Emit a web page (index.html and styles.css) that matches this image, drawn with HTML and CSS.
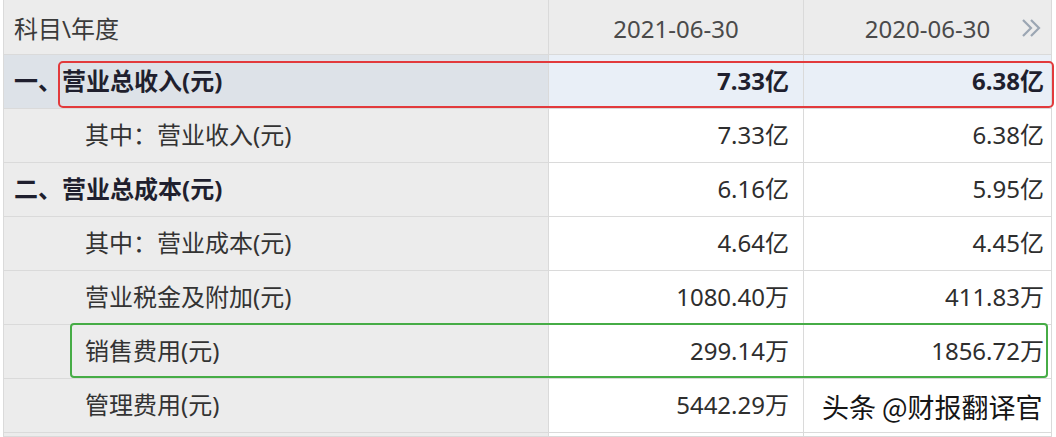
FILE: index.html
```html
<!DOCTYPE html>
<html lang="zh-CN">
<head>
<meta charset="utf-8">
<link rel="stylesheet" href="styles.css">
</head>
<body>
<div class="sheet">
  <table class="fin">
    <colgroup>
      <col class="c-label">
      <col class="c-v1">
      <col class="c-v2">
    </colgroup>
    <thead>
      <tr class="head">
        <th class="lbl">科目\年度</th>
        <th class="date">2021-06-30</th>
        <th class="date last">2020-06-30
          <svg class="more" width="24" height="20" viewBox="0 0 24 20"><path d="M3 2 L11 10 L3 18 M11 2 L19 10 L11 18" fill="none" stroke="#9ba6b3" stroke-width="2.2"/></svg>
        </th>
      </tr>
    </thead>
    <tbody>
      <tr class="hl bold">
        <td class="lbl">一、营业总收入(元)</td>
        <td class="v1">7.33亿</td>
        <td class="v2">6.38亿</td>
      </tr>
      <tr>
        <td class="lbl sub">其中：营业收入(元)</td>
        <td class="v1">7.33亿</td>
        <td class="v2">6.38亿</td>
      </tr>
      <tr class="bold">
        <td class="lbl">二、营业总成本(元)</td>
        <td class="v1 norm">6.16亿</td>
        <td class="v2 norm">5.95亿</td>
      </tr>
      <tr>
        <td class="lbl sub">其中：营业成本(元)</td>
        <td class="v1">4.64亿</td>
        <td class="v2">4.45亿</td>
      </tr>
      <tr>
        <td class="lbl sub">营业税金及附加(元)</td>
        <td class="v1">1080.40万</td>
        <td class="v2">411.83万</td>
      </tr>
      <tr>
        <td class="lbl sub">销售费用(元)</td>
        <td class="v1">299.14万</td>
        <td class="v2">1856.72万</td>
      </tr>
      <tr>
        <td class="lbl sub">管理费用(元)</td>
        <td class="v1">5442.29万</td>
        <td class="v2"></td>
      </tr>
      <tr class="tail">
        <td class="lbl"></td>
        <td class="v1"></td>
        <td class="v2"></td>
      </tr>
    </tbody>
  </table>
  <div class="mark red"></div>
  <div class="mark green"></div>
  <div class="watermark">头条 @财报翻译官</div>
</div>
</body>
</html>
```
FILE: styles.css
```css
html, body {
  margin: 0;
  padding: 0;
  background: #ffffff;
  overflow: hidden;
}
body {
  width: 1056px;
  height: 437px;
  font-family: "Noto Sans", "Noto Sans CJK SC", sans-serif;
  color: #333;
}
.sheet {
  position: relative;
  padding-left: 3px;
  width: 1048px;
}
.fin {
  border-collapse: collapse;
  table-layout: fixed;
  width: 1048px;
  font-size: 24px;
}
.c-label { width: 545px; }
.c-v1 { width: 255px; }
.c-v2 { width: 248px; }
.fin th, .fin td {
  border: 1px solid #dadada;
  border-top: none;
  padding: 0;
  white-space: nowrap;
  line-height: 28px;
}
.head th {
  height: 54px;
  padding-top: 4px;
  box-sizing: border-box;
  background: #ececec;
  font-weight: normal;
  color: #3a3a3a;
}
.head .lbl { text-align: left; padding-left: 10px; }
.head .date { text-align: center; color: #4a4a4a; position: relative; }
.more {
  position: absolute;
  right: 7px;
  top: 18px;
}
.fin td {
  height: 53px;
}
.fin .tail td {
  height: 3px;
}
td.lbl {
  background: #ececec;
  padding-left: 10px;
  color: #333;
}
td.lbl.sub { padding-left: 81px; }
td.v1, td.v2 {
  text-align: right;
  background: #ffffff;
  color: #2e2e2e;
}
td.v1 { padding-right: 14px; }
td.v2 { padding-right: 7px; }
.bold td { font-weight: bold; color: #1f1f2e; }
.bold td.norm { font-weight: normal; color: #2e2e2e; }
.hl td.lbl { background: #dde2e8; }
.hl td.v1, .hl td.v2 { background: #e9eff7; }
.mark {
  position: absolute;
  box-sizing: border-box;
  border-radius: 5px;
}
.mark.red {
  left: 58px;
  top: 61px;
  width: 996px;
  height: 47px;
  border: 2px solid #e23a3c;
}
.mark.green {
  left: 70px;
  top: 323px;
  width: 978px;
  height: 55px;
  border: 2px solid #46ac46;
  border-radius: 4px;
}
.watermark {
  position: absolute;
  left: 822px;
  top: 391px;
  font-size: 27px;
  line-height: 32px;
  color: #151515;
  font-family: "Noto Sans CJK SC", sans-serif;
  text-shadow: 0 0 2px #fff, 0 0 2px #fff;
}
```
